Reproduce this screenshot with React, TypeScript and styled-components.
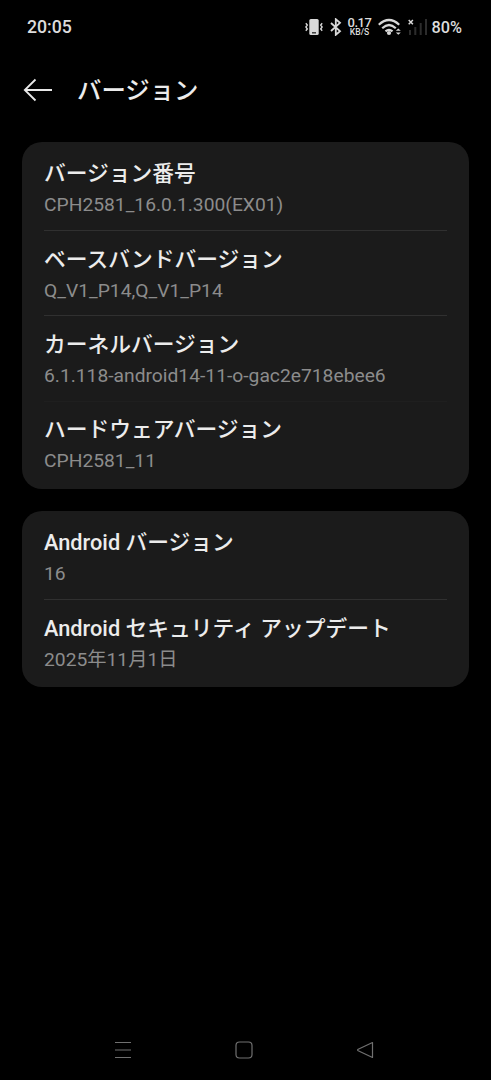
import React from 'react';
import styled, { createGlobalStyle } from 'styled-components';

const Global = createGlobalStyle`
  * { box-sizing: border-box; }
  body { margin: 0; background: #000; font-family: Roboto, "Noto Sans CJK JP", sans-serif; }
`;
const Screen = styled.div`
  width: 100%; height: 1080px; display: flex; flex-direction: column; background: #000; overflow: hidden;
`;
const StatusBar = styled.header`
  height: 54px; flex: none; display: flex; align-items: center; justify-content: space-between;
  padding: 0 29px 0 27px; color: #dcdcdc; font-size: 17.7px; font-weight: 500;
`;
const StatusIcons = styled.div`
  display: flex; align-items: center;
  svg { display: block; flex: none; }
`;
const Speed = styled.div`
  width: 24px; margin: 0 6px; display: flex; flex-direction: column; align-items: center; font-weight: 500;
`;
const Rate = styled.span`font-size: 13px; line-height: 11px; letter-spacing: -0.5px;`;
const Unit = styled.span`font-size: 8.6px; line-height: 9px;`;
const Percent = styled.span`margin-left: 4px; font-size: 16.3px;`;
const TitleBar = styled.div`
  height: 72px; flex: none; display: flex; align-items: center; gap: 24px; padding-left: 23px;
`;
const Title = styled.h1`
  margin: 1px 0 0; color: #ececec; font-size: 24.4px; line-height: 36px; font-weight: 500;
`;
const Cards = styled.main`
  flex: 1; padding: 16px 22px 0; display: flex; flex-direction: column; gap: 22px;
`;
const Card = styled.section`
  background: #1b1b1b; border-radius: 20px; padding: 3px 22px;
`;
const Row = styled.div<{ $faint?: boolean }>`
  height: 85.3px; padding-top: 12.9px;
  &:first-child { height: 85px; padding-top: 13px; }
  &:not(:first-child) { border-top: 1px solid ${p => (p.$faint ? '#1f1f1f' : '#303030')}; }
`;
const Label = styled.div`
  color: #ececec; font-size: 21.75px; line-height: 32px; font-weight: 500; white-space: nowrap;
`;
const Value = styled.div`
  color: #8c8c8c; font-size: 19.25px; line-height: 29px; white-space: nowrap;
`;
const NavBar = styled.nav`
  height: 60px; flex: none; display: flex; justify-content: center; align-items: center; gap: 101px;
  padding-right: 3px;
`;

const VibrateIcon = () => (
  <svg width="18" height="18" viewBox="0 0 18 18" fill="none" stroke="#d8d8d8" strokeWidth="1.4">
    <rect x="4.3" y="1" width="9.4" height="16" rx="1.5" fill="#d8d8d8" stroke="none" />
    <path d="M7 14.8h4" stroke="#333" />
    <path d="M.8 5.2 2.3 7 .9 9l1.4 2-1.5 1.8M17.2 5.2 15.7 7l1.4 2-1.4 2 1.5 1.8" />
  </svg>
);
const BluetoothIcon = () => (
  <svg width="12" height="18" viewBox="0 0 12 18" fill="none" stroke="#d8d8d8" strokeWidth="1.8">
    <path d="M1 5l9 8.2-4.2 3.6V1.2L10 4.8 1 13" />
  </svg>
);
const WifiIcon = () => (
  <svg width="24" height="18" viewBox="0 0 24 18" fill="none" stroke="#d8d8d8" strokeWidth="2.2">
    <path d="M.8 6.7Q11 -2.7 21.2 6.7M4.2 10.2Q11 3.8 17.8 10.2M7.5 13.4Q11 10.2 14.5 13.4" />
    <circle cx="11" cy="15" r="2.1" fill="#d8d8d8" stroke="none" />
    <path d="M17.8 12.8 20.3 10.4 22.8 12.8zM17.8 14.4h5l-2.5 2.4z" fill="#d8d8d8" stroke="none" />
  </svg>
);
const SignalIcon = () => (
  <svg width="20" height="18" viewBox="0 0 20 18" fill="none" stroke="#2c2c2c" strokeWidth="2">
    <path d="M2 12v5M7.3 9v8M12.7 5v12M18 1v16" />
    <path d="M.7 2l4.2 4.2M4.9 2 .7 6.2" stroke="#d8d8d8" strokeWidth="1.5" />
  </svg>
);

const groups = [
  [
    ['バージョン番号', 'CPH2581_16.0.1.300(EX01)'],
    ['ベースバンドバージョン', 'Q_V1_P14,Q_V1_P14'],
    ['カーネルバージョン', '6.1.118-android14-11-o-gac2e718ebee6'],
    ['ハードウェアバージョン', 'CPH2581_11'],
  ],
  [
    ['Android バージョン', '16'],
    ['Android セキュリティ アップデート', '2025年11月1日'],
  ],
];

export default function App() {
  return (
    <Screen>
      <Global />
      <StatusBar>
        <span>20:05</span>
        <StatusIcons>
          <VibrateIcon />
          <svg width="7" height="1" />
          <BluetoothIcon />
          <Speed><Rate>0.17</Rate><Unit>KB/S</Unit></Speed>
          <WifiIcon />
          <svg width="6" height="1" />
          <SignalIcon />
          <Percent>80%</Percent>
        </StatusIcons>
      </StatusBar>
      <TitleBar>
        <svg width="30" height="24" viewBox="0 0 30 24" fill="none" stroke="#e8e8e8" strokeWidth="1.8">
          <path d="M12.5 1.5 1.8 12 12.5 22.5M2 12h27" />
        </svg>
        <Title>バージョン</Title>
      </TitleBar>
      <Cards>
        {groups.map((rows, i) => (
          <Card key={i}>
            {rows.map(([label, value], j) => (
              <Row key={label} $faint={j === 3}><Label>{label}</Label><Value>{value}</Value></Row>
            ))}
          </Card>
        ))}
      </Cards>
      <NavBar>
        <svg width="20" height="20" viewBox="0 0 20 20" fill="none" stroke="#707070"><path d="M2 2.5h16M2 10h16M2 17.5h16" /></svg>
        <svg width="20" height="20" viewBox="0 0 20 20" fill="none" stroke="#707070" strokeWidth="1.2"><rect x="2" y="2" width="16" height="16" rx="3.5" /></svg>
        <svg width="20" height="20" viewBox="0 0 20 20" fill="none" stroke="#707070" strokeWidth="1.2" strokeLinejoin="round"><path d="M17.5 2.5v15L3.2 10.8q-1.2-.8 0-1.6z" /></svg>
      </NavBar>
    </Screen>
  );
}
